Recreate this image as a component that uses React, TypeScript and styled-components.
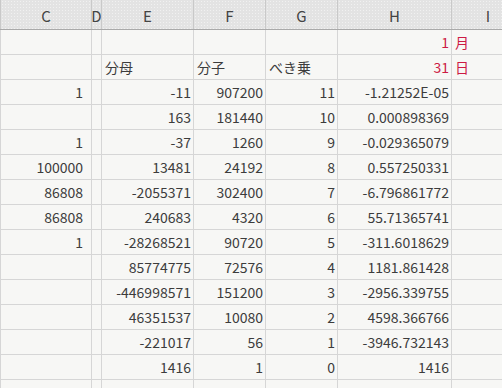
import styled, { createGlobalStyle } from 'styled-components';

const GlobalStyle = createGlobalStyle`
  html, body {
    margin: 0;
    padding: 0;
    background: #f7f7f5;
    overflow: hidden;
  }
  body {
    font-family: 'Noto Sans CJK JP', 'Noto Sans', sans-serif;
  }
`;

const COLUMNS = '90px 9px 91px 71px 71px 113px 72px';

const Sheet = styled.div`
  width: 502px;
  height: 388px;
  overflow: hidden;
  display: flex;
  flex-direction: column;
`;

const HeaderRow = styled.div`
  display: grid;
  grid-template-columns: ${COLUMNS};
  column-gap: 1px;
  padding-left: 1px;
  width: max-content;
  height: 29px;
  flex-shrink: 0;
  background: #c9c9c9;
  border-bottom: 1px solid #a9a9a9;
`;

const HeaderCell = styled.div`
  background-color: #e3e3e3;
  background-image: radial-gradient(#f1f1f1 0.7px, transparent 0.8px);
  background-size: 3px 3px;
  color: #444;
  font-size: 15px;
  display: flex;
  align-items: center;
  justify-content: center;
  padding-top: 2px;
  overflow: hidden;
  white-space: nowrap;
`;

const Body = styled.div`
  display: grid;
  grid-template-columns: ${COLUMNS};
  grid-auto-rows: 24px;
  gap: 1px;
  padding-left: 1px;
  width: max-content;
  background: #d6d6d6;
  flex: 1;
  min-height: 0;
  overflow: hidden;
`;

const Cell = styled.div<{ $align: 'left' | 'right'; $pad: number; $red?: boolean }>`
  background: #f7f7f5;
  color: ${(p) => (p.$red ? '#cc1a44' : '#3c3c3c')};
  font-size: 14px;
  line-height: 24px;
  text-align: ${(p) => p.$align};
  padding: ${(p) => (p.$align === 'right' ? `0 ${p.$pad}px 0 0` : `0 0 0 ${p.$pad}px`)};
  white-space: nowrap;
  overflow: hidden;
`;

type Col = { key: string; align: 'left' | 'right'; pad: number };

const cols: Col[] = [
  { key: 'C', align: 'right', pad: 8 },
  { key: 'D', align: 'right', pad: 2 },
  { key: 'E', align: 'right', pad: 2 },
  { key: 'F', align: 'right', pad: 2 },
  { key: 'G', align: 'right', pad: 2 },
  { key: 'H', align: 'right', pad: 2 },
  { key: 'I', align: 'left', pad: 3 },
];

type RowData = { values: string[]; left?: number[]; red?: number[] };

const rows: RowData[] = [
  { values: ['', '', '', '', '', '1', '月'], red: [5, 6] },
  { values: ['', '', '分母', '分子', 'べき乗', '31', '日'], left: [2, 3, 4], red: [5, 6] },
  { values: ['1', '', '-11', '907200', '11', '-1.21252E-05', ''] },
  { values: ['', '', '163', '181440', '10', '0.000898369', ''] },
  { values: ['1', '', '-37', '1260', '9', '-0.029365079', ''] },
  { values: ['100000', '', '13481', '24192', '8', '0.557250331', ''] },
  { values: ['86808', '', '-2055371', '302400', '7', '-6.796861772', ''] },
  { values: ['86808', '', '240683', '4320', '6', '55.71365741', ''] },
  { values: ['1', '', '-28268521', '90720', '5', '-311.6018629', ''] },
  { values: ['', '', '85774775', '72576', '4', '1181.861428', ''] },
  { values: ['', '', '-446998571', '151200', '3', '-2956.339755', ''] },
  { values: ['', '', '46351537', '10080', '2', '4598.366766', ''] },
  { values: ['', '', '-221017', '56', '1', '-3946.732143', ''] },
  { values: ['', '', '1416', '1', '0', '1416', ''] },
  { values: ['', '', '', '', '', '', ''] },
];

export default function App() {
  return (
    <>
      <GlobalStyle />
      <Sheet>
        <HeaderRow>
          {cols.map((c) => (
            <HeaderCell key={c.key}>{c.key}</HeaderCell>
          ))}
        </HeaderRow>
        <Body>
          {rows.map((row, r) =>
            row.values.map((v, i) => {
              const isLeft = row.left?.includes(i);
              return (
                <Cell
                  key={`${r}-${i}`}
                  $align={isLeft ? 'left' : cols[i].align}
                  $pad={isLeft ? 3 : cols[i].pad}
                  $red={row.red?.includes(i)}
                >
                  {v}
                </Cell>
              );
            })
          )}
        </Body>
      </Sheet>
    </>
  );
}
